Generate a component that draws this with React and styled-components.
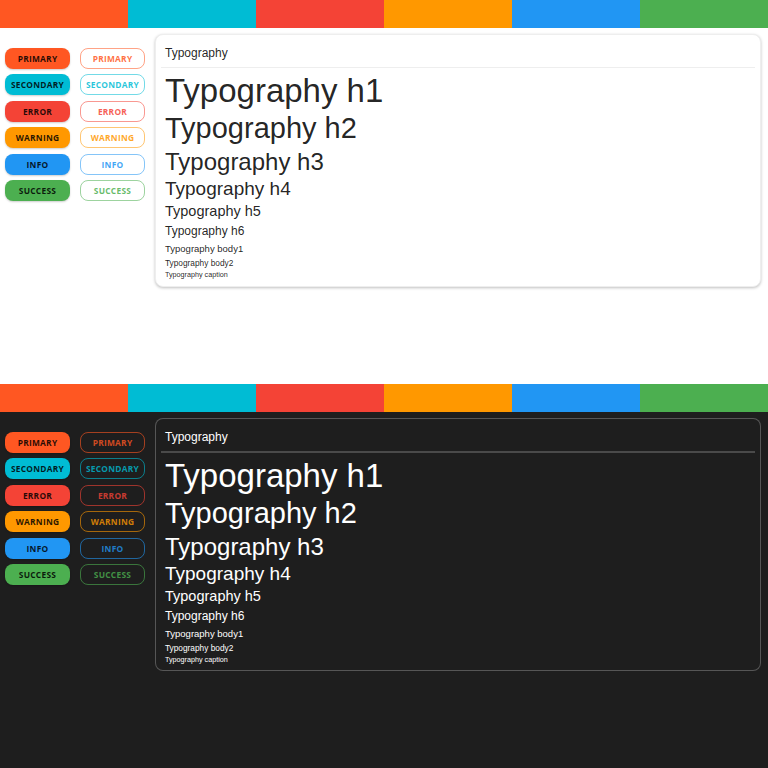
import React from "react";
import styled, { createGlobalStyle } from "styled-components";

const palette = [
  { name: "primary", rgb: "255, 87, 34" },
  { name: "secondary", rgb: "0, 188, 212" },
  { name: "error", rgb: "244, 67, 54" },
  { name: "warning", rgb: "255, 152, 0" },
  { name: "info", rgb: "33, 150, 243" },
  { name: "success", rgb: "76, 175, 80" },
];

const variants = [
  { label: "Typography h1", size: 33, lh: 38 },
  { label: "Typography h2", size: 29, lh: 36 },
  { label: "Typography h3", size: 24, lh: 32 },
  { label: "Typography h4", size: 19, lh: 22 },
  { label: "Typography h5", size: 14.5, lh: 22 },
  { label: "Typography h6", size: 12, lh: 18 },
  { label: "Typography body1", size: 9.5, lh: 17 },
  { label: "Typography body2", size: 8.3, lh: 12 },
  { label: "Typography caption", size: 7.2, lh: 12 },
];

const Global = createGlobalStyle`
  body {
    margin: 0;
    background: #ffffff;
  }
`;

const ThemeDemo = ({ dark }) => (
  <Section $dark={dark}>
    <Strip>
      {palette.map((c) => (
        <Swatch key={c.name} $rgb={c.rgb} />
      ))}
    </Strip>
    <Body>
      <ButtonGrid>
        {palette.map((c) => (
          <React.Fragment key={c.name}>
            <FilledButton $rgb={c.rgb}>{c.name}</FilledButton>
            <OutlineButton $rgb={c.rgb} $dark={dark}>
              {c.name}
            </OutlineButton>
          </React.Fragment>
        ))}
      </ButtonGrid>
      <Card $dark={dark}>
        <CardTitle>Typography</CardTitle>
        <Divider $dark={dark} />
        <CardContent>
          {variants.map((v) => (
            <Text key={v.label} $size={v.size} $lh={v.lh}>
              {v.label}
            </Text>
          ))}
        </CardContent>
      </Card>
    </Body>
  </Section>
);

const App = () => (
  <>
    <Global />
    <ThemeDemo />
    <ThemeDemo dark />
  </>
);

export default App;

const Section = styled.div`
  height: 384px;
  background: ${(p) => (p.$dark ? "#1e1e1e" : "#ffffff")};
  color: ${(p) => (p.$dark ? "#ffffff" : "rgba(0, 0, 0, 0.87)")};
  font-family: "Liberation Sans", Arial, sans-serif;
  overflow: hidden;
`;

const Strip = styled.div`
  display: flex;
  height: 28px;
`;

const Swatch = styled.div`
  flex: 1;
  background: rgb(${(p) => p.$rgb});
`;

const Body = styled.div`
  display: flex;
  align-items: flex-start;
  gap: 10px;
  padding: 6px 7px 0 5px;
`;

const ButtonGrid = styled.div`
  display: grid;
  grid-template-columns: 65px 65px;
  column-gap: 10px;
  row-gap: 5.6px;
  margin-top: 13.5px;
`;

const ButtonBase = styled.div`
  box-sizing: border-box;
  height: 21px;
  border-radius: 8px;
  display: flex;
  align-items: center;
  justify-content: center;
  font-family: "Open Sans", "Liberation Sans", sans-serif;
  font-weight: 700;
  font-size: 8.4px;
  letter-spacing: 0.25px;
  text-transform: uppercase;
`;

const FilledButton = styled(ButtonBase)`
  background: rgb(${(p) => p.$rgb});
  color: rgba(0, 0, 0, 0.85);
  box-shadow: 0 1px 2px rgba(0, 0, 0, 0.2);
`;

const OutlineButton = styled(ButtonBase)`
  border: 1px solid rgba(${(p) => p.$rgb}, ${(p) => (p.$dark ? 0.6 : 0.55)});
  color: rgba(${(p) => p.$rgb}, ${(p) => (p.$dark ? 0.8 : 0.85)});
`;

const Card = styled.div`
  flex: 1;
  box-sizing: border-box;
  height: 253px;
  border-radius: 8px;
  padding: 11px 5px 4px;
  background: ${(p) => (p.$dark ? "#1e1e1e" : "#ffffff")};
  border: 1px solid ${(p) => (p.$dark ? "rgba(255, 255, 255, 0.25)" : "#eeeeee")};
  box-shadow: ${(p) =>
    p.$dark ? "none" : "0 1px 3px rgba(0, 0, 0, 0.25)"};
`;

const CardTitle = styled.div`
  font-size: 12px;
  line-height: 14px;
  padding-left: 4px;
`;

const Divider = styled.div`
  height: ${(p) => (p.$dark ? "2px" : "1px")};
  margin-top: 7px;
  background: ${(p) => (p.$dark ? "#4a4a4a" : "#eeeeee")};
`;

const CardContent = styled.div`
  padding: 4px 4px 0;
`;

const Text = styled.div`
  font-size: ${(p) => p.$size}px;
  line-height: ${(p) => p.$lh}px;
  white-space: nowrap;
`;
